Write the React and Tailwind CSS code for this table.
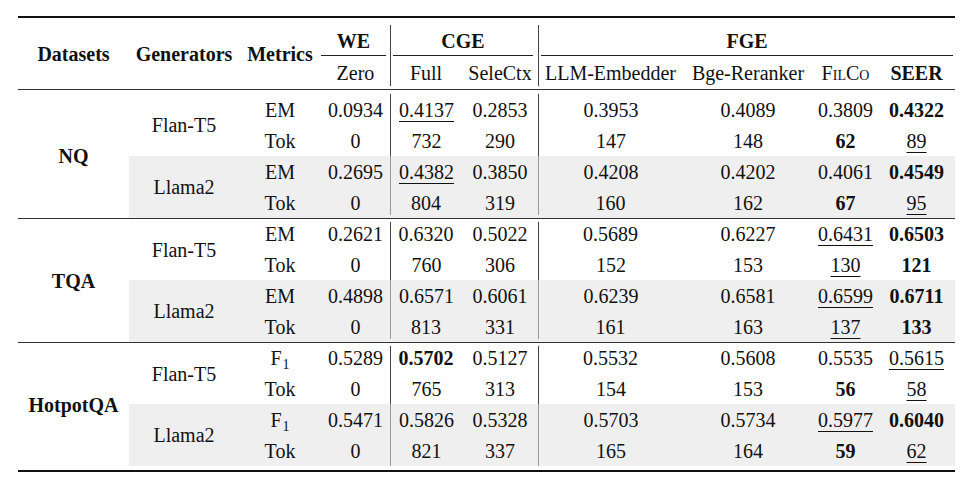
import React from "react";

const data = [
  {
    name: "NQ",
    gens: [
      {
        gen: "Flan-T5",
        rows: [
          ["EM", "0.0934", "_0.4137", "0.2853", "0.3953", "0.4089", "0.3809", "*0.4322"],
          ["Tok", "0", "732", "290", "147", "148", "*62", "_89"],
        ],
      },
      {
        gen: "Llama2",
        rows: [
          ["EM", "0.2695", "_0.4382", "0.3850", "0.4208", "0.4202", "0.4061", "*0.4549"],
          ["Tok", "0", "804", "319", "160", "162", "*67", "_95"],
        ],
      },
    ],
  },
  {
    name: "TQA",
    gens: [
      {
        gen: "Flan-T5",
        rows: [
          ["EM", "0.2621", "0.6320", "0.5022", "0.5689", "0.6227", "_0.6431", "*0.6503"],
          ["Tok", "0", "760", "306", "152", "153", "_130", "*121"],
        ],
      },
      {
        gen: "Llama2",
        rows: [
          ["EM", "0.4898", "0.6571", "0.6061", "0.6239", "0.6581", "_0.6599", "*0.6711"],
          ["Tok", "0", "813", "331", "161", "163", "_137", "*133"],
        ],
      },
    ],
  },
  {
    name: "HotpotQA",
    gens: [
      {
        gen: "Flan-T5",
        rows: [
          ["F1", "0.5289", "*0.5702", "0.5127", "0.5532", "0.5608", "0.5535", "_0.5615"],
          ["Tok", "0", "765", "313", "154", "153", "*56", "_58"],
        ],
      },
      {
        gen: "Llama2",
        rows: [
          ["F1", "0.5471", "0.5826", "0.5328", "0.5703", "0.5734", "_0.5977", "*0.6040"],
          ["Tok", "0", "821", "337", "165", "164", "*59", "_62"],
        ],
      },
    ],
  },
];

// "*" = bold (best), "_" = underlined (second best)
function Val({ v }) {
  if (v[0] === "*") return <span className="font-bold">{v.slice(1)}</span>;
  if (v[0] === "_")
    return <span className="underline decoration-1 underline-offset-[4px]">{v.slice(1)}</span>;
  return v;
}

function Metric({ m }) {
  if (m === "F1")
    return (
      <span>
        F<span className="relative top-[4px] ml-[1px] text-[14px] leading-[14px]">1</span>
      </span>
    );
  return m;
}

// vertical rule, broken a few px next to the horizontal rules (booktabs style)
function vline(kind, grey) {
  if (kind === "full") return grey ? "border-l border-l-[#9a9a9a]" : "border-l border-l-[#444]";
  const img = grey ? "bg-[linear-gradient(#9a9a9a,#9a9a9a)]" : "bg-[linear-gradient(#444,#444)]";
  if (kind === "top") return `${img} bg-no-repeat bg-[length:1px_calc(100%-3px)] [background-position:left_top]`;
  return `${img} bg-no-repeat bg-[length:1px_calc(100%-3px)] [background-position:left_bottom]`;
}

export default function App() {
  return (
    <div className="bg-white w-[966px] h-[481px] pt-[16px] pl-[18px] text-[#111] [font-family:'Liberation_Serif','Times_New_Roman',serif] text-[20px] leading-[24px]">
      <table className="table-fixed w-[937px] border-separate border-spacing-0 border-t-2 border-b-2 border-t-[#111] border-b-[#111]">
        <colgroup>
          <col className="w-[111px]" />
          <col className="w-[110px]" />
          <col className="w-[82px]" />
          <col className="w-[69px]" />
          <col className="w-[72px]" />
          <col className="w-[76px]" />
          <col className="w-[145px]" />
          <col className="w-[130px]" />
          <col className="w-[65px]" />
          <col className="w-[77px]" />
        </colgroup>
        <thead>
          <tr className="h-[7px]">
            <th rowSpan={3} className="p-0 font-bold text-center align-middle border-b border-b-[#333]">Datasets</th>
            <th rowSpan={3} className="p-0 font-bold text-center align-middle border-b border-b-[#333]">Generators</th>
            <th rowSpan={3} className="p-0 font-bold text-center align-middle border-b border-b-[#333]">Metrics</th>
            <th colSpan={7} className="p-0"></th>
          </tr>
          <tr className="h-[31px]">
            <th className="p-0 align-bottom">
              <div className="h-[31px] pt-[2px] mr-[4px] flex items-center justify-center font-bold border-b border-b-[#222]">WE</div>
            </th>
            <th colSpan={2} className="p-0 align-bottom border-l border-l-[#444]">
              <div className="h-[31px] pt-[2px] ml-[2px] mr-[5px] flex items-center justify-center font-bold border-b border-b-[#222]">CGE</div>
            </th>
            <th colSpan={4} className="p-0 align-bottom border-l border-l-[#444]">
              <div className="h-[31px] pt-[2px] ml-[2px] mr-[2px] flex items-center justify-center font-bold border-b border-b-[#222]">FGE</div>
            </th>
          </tr>
          <tr className="h-[34px]">
            <th className="p-0 font-normal text-center border-b border-b-[#333]">Zero</th>
            <th className={`p-0 font-normal text-center border-b border-b-[#333] ${vline("top", false)}`}>Full</th>
            <th className="p-0 font-normal text-center border-b border-b-[#333]">SeleCtx</th>
            <th className={`p-0 font-normal text-center border-b border-b-[#333] ${vline("top", false)}`}>LLM-Embedder</th>
            <th className="p-0 font-normal text-center border-b border-b-[#333]">Bge-Reranker</th>
            <th className="p-0 font-normal text-center border-b border-b-[#333]">
              <span className="[font-variant:small-caps]">FilCo</span>
            </th>
            <th className="p-0 font-bold text-center border-b border-b-[#333]">SEER</th>
          </tr>
        </thead>
        <tbody>
          <tr className="h-[4px]">
            <td colSpan={10} className="p-0"></td>
          </tr>
          {data.map((d, di) =>
            d.gens.map((g, gi) =>
              g.rows.map((r, ri) => {
                const first = gi === 0 && ri === 0;
                const last = gi === 1 && ri === 1;
                const rule = first && di > 0 ? "border-t border-t-[#333]" : "";
                const grey = gi === 1;
                const bg = grey ? "bg-[#efefef]" : "";
                let kind = "full";
                if (first && di > 0) kind = "bottom";
                if (last && di < data.length - 1) kind = "top";
                return (
                  <tr key={`${di}-${gi}-${ri}`} className="h-[31px]">
                    {first && (
                      <td rowSpan={4} className={`p-0 text-center align-middle font-bold ${rule}`}>{d.name}</td>
                    )}
                    {ri === 0 && (
                      <td rowSpan={2} className={`p-0 text-center align-middle ${bg} ${rule}`}>{g.gen}</td>
                    )}
                    <td className={`p-0 text-center ${bg} ${rule}`}>
                      <Metric m={r[0]} />
                    </td>
                    {r.slice(1).map((v, ci) => (
                      <td
                        key={ci}
                        className={`p-0 text-center ${bg} ${rule} ${ci === 1 || ci === 3 ? vline(kind, grey) : ""}`}
                      >
                        <Val v={v} />
                      </td>
                    ))}
                  </tr>
                );
              })
            )
          )}
          <tr className="h-[4px]">
            <td colSpan={10} className="p-0"></td>
          </tr>
        </tbody>
      </table>
    </div>
  );
}
